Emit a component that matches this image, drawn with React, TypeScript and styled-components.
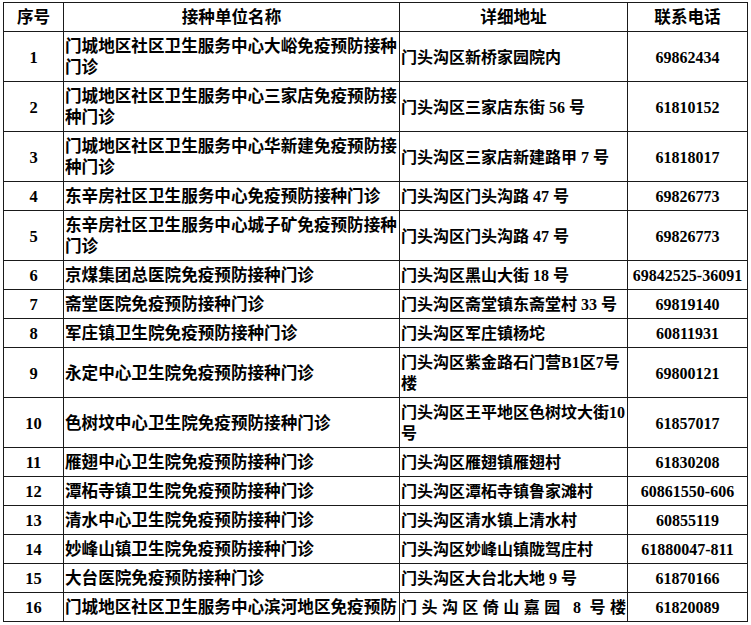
import React from "react";
import styled, { createGlobalStyle } from "styled-components";

const Global = createGlobalStyle`
  html, body { margin: 0; padding: 0; background: #fff; }
  body { font-family: "Liberation Serif", "Noto Sans CJK SC", serif; color: #000; }
`;

const Page = styled.div`
  padding: 2px 0 0 3px;
`;

const Table = styled.table`
  border-collapse: collapse;
  table-layout: fixed;
  width: 745px;
  font-family: "Liberation Serif", "Noto Sans CJK SC", serif;
  font-weight: 700;
  font-size: 16.6px;
  line-height: 21px;
  color: #000;
`;

const Cell = styled.td<{ $align?: "left" | "center"; $size?: number }>`
  border: 1px solid #1a1a1a;
  padding: 4px 1px 3px 1px;
  vertical-align: middle;
  text-align: ${(p) => p.$align ?? "left"};
  font-size: ${(p) => p.$size ?? 16.6}px;
  overflow: hidden;
`;

const HeadCell = styled.th`
  border: 1px solid #1a1a1a;
  padding: 4px 1px 3px 1px;
  text-align: center;
  font-weight: 700;
  vertical-align: middle;
`;

const Text = styled.div<{ $clip?: boolean; $justify?: boolean }>`
  white-space: ${(p) => (p.$justify ? "normal" : "pre")};
  overflow: hidden;
  ${(p) => (p.$clip ? "height: 21px;" : "")}
  ${(p) => (p.$justify ? "text-align: justify; text-align-last: justify;" : "")}
`;

type Row = { name: string; addr: string; phone: string; justify?: boolean };

const rows: Row[] = [
  { name: "门城地区社区卫生服务中心大峪免疫预防接种\n门诊", addr: "门头沟区新桥家园院内", phone: "69862434" },
  { name: "门城地区社区卫生服务中心三家店免疫预防接\n种门诊", addr: "门头沟区三家店东街 56 号", phone: "61810152" },
  { name: "门城地区社区卫生服务中心华新建免疫预防接\n种门诊", addr: "门头沟区三家店新建路甲 7 号", phone: "61818017" },
  { name: "东辛房社区卫生服务中心免疫预防接种门诊", addr: "门头沟区门头沟路 47 号", phone: "69826773" },
  { name: "东辛房社区卫生服务中心城子矿免疫预防接种\n门诊", addr: "门头沟区门头沟路 47 号", phone: "69826773" },
  { name: "京煤集团总医院免疫预防接种门诊", addr: "门头沟区黑山大街 18 号", phone: "69842525-36091" },
  { name: "斋堂医院免疫预防接种门诊", addr: "门头沟区斋堂镇东斋堂村 33 号", phone: "69819140" },
  { name: "军庄镇卫生院免疫预防接种门诊", addr: "门头沟区军庄镇杨坨", phone: "60811931" },
  { name: "永定中心卫生院免疫预防接种门诊", addr: "门头沟区紫金路石门营B1区7号\n楼", phone: "69800121" },
  { name: "色树坟中心卫生院免疫预防接种门诊", addr: "门头沟区王平地区色树坟大街10\n号", phone: "61857017" },
  { name: "雁翅中心卫生院免疫预防接种门诊", addr: "门头沟区雁翅镇雁翅村", phone: "61830208" },
  { name: "潭柘寺镇卫生院免疫预防接种门诊", addr: "门头沟区潭柘寺镇鲁家滩村", phone: "60861550-606" },
  { name: "清水中心卫生院免疫预防接种门诊", addr: "门头沟区清水镇上清水村", phone: "60855119" },
  { name: "妙峰山镇卫生院免疫预防接种门诊", addr: "门头沟区妙峰山镇陇驾庄村", phone: "61880047-811" },
  { name: "大台医院免疫预防接种门诊", addr: "门头沟区大台北大地 9 号", phone: "61870166" },
  { name: "门城地区社区卫生服务中心滨河地区免疫预防\n接种门诊", addr: "门头沟区倚山嘉园 8 号楼", phone: "61820089", justify: true },
];

export default function App() {
  return (
    <Page>
      <Global />
      <Table>
        <colgroup>
          <col style={{ width: 60 }} />
          <col style={{ width: 336 }} />
          <col style={{ width: 228 }} />
          <col style={{ width: 120 }} />
        </colgroup>
        <thead>
          <tr>
            <HeadCell>序号</HeadCell>
            <HeadCell>接种单位名称</HeadCell>
            <HeadCell>详细地址</HeadCell>
            <HeadCell>联系电话</HeadCell>
          </tr>
        </thead>
        <tbody>
          {rows.map((r, i) => {
            const clip = i === rows.length - 1;
            return (
              <tr key={i}>
                <Cell $align="center" $size={16.5}>
                  <Text $clip={clip}>{i + 1}</Text>
                </Cell>
                <Cell>
                  <Text $clip={clip}>{r.name}</Text>
                </Cell>
                <Cell $size={16}>
                  <Text $clip={clip} $justify={r.justify}>{r.addr}</Text>
                </Cell>
                <Cell $align="center" $size={16}>
                  <Text $clip={clip}>{r.phone}</Text>
                </Cell>
              </tr>
            );
          })}
        </tbody>
      </Table>
    </Page>
  );
}
